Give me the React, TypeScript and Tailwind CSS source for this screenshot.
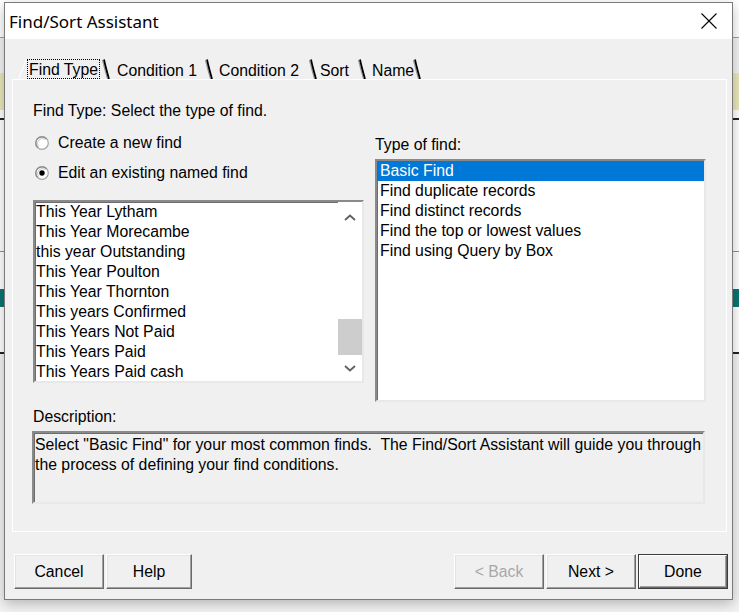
import React from "react";

const FONT = "font-['Liberation_Sans',Arial,sans-serif]";

function Sep() {
  return (
    <svg width="12" height="21" viewBox="0 0 12 21" className="shrink-0">
      <path d="M2.5 2 C3.8 8 5.5 14 7.5 21" stroke="#8a8a8a" strokeWidth="1" fill="none" />
      <path d="M4 1.5 C5.3 8 7 14 9 21" stroke="#000" strokeWidth="1.8" fill="none" />
    </svg>
  );
}

function Radio({ checked }: { checked?: boolean }) {
  return (
    <svg width="14" height="14" viewBox="0 0 14 14" className="shrink-0">
      <circle cx="7" cy="7" r="6.3" fill="#fff" stroke="#a6a6a6" strokeWidth="1.2" />
      <path d="M2.6 11.4 A6.2 6.2 0 0 1 11.4 2.6" stroke="#8a8a8a" strokeWidth="1.2" fill="none" />
      <path d="M3.5 10.5 A5 5 0 0 1 10.5 3.5" stroke="#c8c8c8" strokeWidth="1" fill="none" />
      {checked && <circle cx="7" cy="7" r="2.7" fill="#000" />}
    </svg>
  );
}

function Chevron({ up }: { up?: boolean }) {
  return (
    <svg width="12" height="7" viewBox="0 0 12 7">
      <path
        d={up ? "M1 6 L6 1.5 L11 6" : "M1 1 L6 5.5 L11 1"}
        stroke="#606060"
        strokeWidth="1.8"
        fill="none"
      />
    </svg>
  );
}

function Button({
  label,
  w,
  disabled,
  def,
}: {
  label: string;
  w: string;
  disabled?: boolean;
  def?: boolean;
}) {
  const base =
    "h-[35px] flex items-center justify-center text-[15.8px] bg-[#f0f0f0] shrink-0 ";
  if (def) {
    return (
      <div className={base + w + " border border-[#3c3c3c] p-0"}>
        <div className="w-full h-full flex items-center justify-center border border-t-white border-l-white border-r-[#696969] border-b-[#696969] shadow-[inset_-1px_-1px_0_#a0a0a0]">
          {label}
        </div>
      </div>
    );
  }
  return (
    <div
      className={
        base +
        w +
        " border border-t-white border-l-white border-r-[#696969] border-b-[#696969] shadow-[inset_-1px_-1px_0_#a0a0a0,inset_1px_1px_0_#e3e3e3] " +
        (disabled ? "text-[#a8a8a8]" : "text-black")
      }
    >
      {label}
    </div>
  );
}

const leftItems = [
  "This Year Lytham",
  "This Year Morecambe",
  "this year Outstanding",
  "This Year Poulton",
  "This Year Thornton",
  "This years Confirmed",
  "This Years Not Paid",
  "This Years Paid",
  "This Years Paid cash",
];

const rightItems = [
  "Basic Find",
  "Find duplicate records",
  "Find distinct records",
  "Find the top or lowest values",
  "Find using Query by Box",
];

const sunken =
  "border-2 border-t-[#8a8a8a] border-l-[#8a8a8a] border-r-[#e8e8e8] border-b-[#e8e8e8] shadow-[inset_1px_1px_0_#6d6d6d]";

export default function App() {
  return (
    <div className={"relative w-[739px] h-[612px] overflow-hidden bg-white text-black " + FONT}>
      {/* background application (behind the dialog) */}
      <div className="flex flex-col w-full h-full">
        <div className="h-[37px] bg-white shrink-0" />
        <div className="h-[1px] bg-[#a0a0a0] shrink-0" />
        <div className="h-[35px] bg-[#f2f2f2] shrink-0" />
        <div className="h-[37px] bg-[#e9e7b8] shrink-0" />
        <div className="h-[8px] bg-white shrink-0" />
        <div className="h-[2px] bg-[#222] shrink-0" />
        <div className="h-[131px] bg-white shrink-0" />
        <div className="h-[1px] bg-[#909090] shrink-0" />
        <div className="h-[37px] bg-white shrink-0" />
        <div className="h-[18px] bg-[#0c7470] shrink-0" />
        <div className="h-[45px] bg-white shrink-0" />
        <div className="h-[2px] bg-[#222] shrink-0" />
        <div className="flex-1 bg-[#f3f3f3]" />
      </div>

      {/* dialog window */}
      <div className="absolute left-[4px] top-[2px] w-[729px] h-[598px] border border-[#7a7a7a] bg-[#f0f0f0] flex flex-col shadow-[0_4px_12px_rgba(0,0,0,0.25)]">
        {/* title bar */}
        <div className="h-[36px] bg-white flex items-center justify-between pl-[4px] pr-[15px] shrink-0">
          <span className="font-['Noto_Sans',sans-serif] text-[17px] leading-none text-black">
            Find/Sort Assistant
          </span>
          <svg width="16" height="16" viewBox="0 0 16 16">
            <path d="M0.5 0.5 L15.5 15.5 M15.5 0.5 L0.5 15.5" stroke="#000" strokeWidth="1.1" />
          </svg>
        </div>

        {/* tabs */}
        <div className="mt-[19px] ml-[7px] h-[21px] flex items-stretch text-[15.8px] shrink-0">
          <div className="w-[6px] shrink-0" />
          <svg width="9" height="21" viewBox="0 0 9 21" className="shrink-0">
            <path d="M0.5 21 L8.5 1" stroke="#ffffff" strokeWidth="1" fill="none" />
          </svg>
          <div className="flex items-end shrink-0">
            <div className="w-[73px] h-[20px] border border-dotted border-black flex items-center pl-[1px] pt-[1px] leading-none whitespace-nowrap">
              Find Type
            </div>
          </div>
          <Sep />
          <div className="w-[91px] pl-[5px] flex items-center pt-[4px] leading-none shrink-0 whitespace-nowrap">Condition 1</div>
          <Sep />
          <div className="w-[92px] pl-[4px] flex items-center pt-[4px] leading-none shrink-0 whitespace-nowrap">Condition 2</div>
          <Sep />
          <div className="w-[37px] pl-[1px] flex items-center pt-[4px] leading-none shrink-0">Sort</div>
          <Sep />
          <div className="w-[43px] pl-[4px] flex items-center pt-[4px] leading-none shrink-0">Name</div>
          <Sep />
        </div>

        {/* tab page */}
        <div className="ml-[7px] w-[715px] h-[453px] border border-white flex flex-col pl-[20px] pr-[21px] text-[15.8px] shrink-0">
          <div className="mt-[21px] h-[20px] leading-[20px]">Find Type: Select the type of find.</div>

          <div className="mt-[7px] h-[274px] flex">
            {/* left column */}
            <div className="w-[331px] flex flex-col shrink-0">
              <div className="h-[30px] flex items-center pl-[2px] gap-[9px]">
                <Radio />
                <span>Create a new find</span>
              </div>
              <div className="h-[30px] flex items-center pl-[2px] gap-[9px]">
                <Radio checked />
                <span>Edit an existing named find</span>
              </div>
              <div className={"mt-[12px] h-[183px] bg-white flex overflow-hidden " + sunken}>
                <div className="flex-1 flex flex-col overflow-hidden pl-[1px]">
                  {leftItems.map((t) => (
                    <div key={t} className="h-[20px] leading-[20px] whitespace-nowrap shrink-0">
                      {t}
                    </div>
                  ))}
                </div>
                <div className="w-[24px] flex flex-col shrink-0 bg-white">
                  <div className="h-[30px] flex items-center justify-center shrink-0">
                    <Chevron up />
                  </div>
                  <div className="h-[124px] flex flex-col shrink-0">
                    <div className="mt-[87px] h-[36px] bg-[#cdcdcd]" />
                  </div>
                  <div className="flex-1 flex items-center justify-center">
                    <Chevron />
                  </div>
                </div>
              </div>
            </div>

            {/* right column */}
            <div className="ml-[11px] w-[331px] flex flex-col shrink-0">
              <div className="mt-[7px] h-[20px] leading-[20px]">Type of find:</div>
              <div className={"mt-[4px] h-[244px] bg-white flex flex-col overflow-hidden " + sunken}>
                {rightItems.map((t, i) => (
                  <div
                    key={t}
                    className={
                      "h-[20px] leading-[20px] pl-[3px] whitespace-nowrap shrink-0 " +
                      (i === 0 ? "bg-[#0078d7] text-white" : "")
                    }
                  >
                    {t}
                  </div>
                ))}
              </div>
            </div>
          </div>

          <div className="mt-[5px] h-[20px] leading-[20px]">Description:</div>
          <div className={"mt-[4px] -ml-[1px] w-[673px] h-[73px] bg-[#f0f0f0] pl-[1px] pt-[2px] overflow-hidden " + sunken}>
            <div className="leading-[20px] whitespace-pre">
              {'Select "Basic Find" for your most common finds.  The Find/Sort Assistant will guide you through'}
            </div>
            <div className="leading-[20px] whitespace-pre">the process of defining your find conditions.</div>
          </div>
        </div>

        {/* buttons */}
        <div className="mt-[22px] ml-[9px] mr-[4px] flex items-start shrink-0">
          <Button label="Cancel" w="w-[90px]" />
          <div className="w-[2px] shrink-0" />
          <Button label="Help" w="w-[86px]" />
          <div className="flex-1" />
          <Button label="< Back" w="w-[90px]" disabled />
          <div className="w-[2px] shrink-0" />
          <Button label="Next >" w="w-[90px]" />
          <div className="w-[2px] shrink-0" />
          <Button label="Done" w="w-[90px]" def />
        </div>
      </div>
    </div>
  );
}
